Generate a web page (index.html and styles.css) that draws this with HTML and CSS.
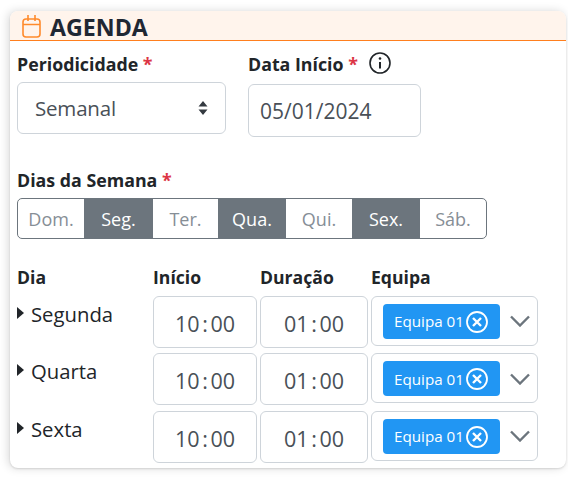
FILE: index.html
```html
<!DOCTYPE html>
<html lang="pt">
<head>
<meta charset="utf-8">
<title>Agenda</title>
<link rel="stylesheet" href="styles.css">
</head>
<body>
<section class="card">
  <header class="card-head">
    <svg class="cal" width="19" height="23" viewBox="0 0 19 23" fill="none" stroke="#ff8a2b" stroke-width="1.6"><rect x="1" y="4" width="17" height="18" rx="3"/><path d="M1 9.500h17M6 0v6M13 0v6"/></svg>
    <h1>AGENDA</h1>
  </header>
  <div class="card-body">
    <div class="top">
      <div class="f-per">
        <label class="lbl">Periodicidade <span class="req">*</span></label>
        <div class="select">Semanal
          <svg width="10" height="16" viewBox="0 0 10 16" fill="#343a40"><path d="M5 1l4.500 5.500h-9zM5 15L.5 9.500h9z"/></svg>
        </div>
      </div>
      <div class="f-date">
        <label class="lbl">Data Início <span class="req">*</span>
          <svg class="info" width="22" height="22" viewBox="0 0 22 22" fill="none" stroke="#212529" stroke-width="1.6"><circle cx="11" cy="11" r="10"/><path d="M11 10v6.500" stroke-width="2"/><circle cx="11" cy="6.500" r="1.300" fill="#212529" stroke="none"/></svg>
        </label>
        <div class="input">05/01/2024</div>
      </div>
    </div>
    <label class="lbl lbl-days">Dias da Semana <span class="req">*</span></label>
    <div class="days">
      <span class="day">Dom.</span><span class="day on">Seg.</span><span class="day">Ter.</span><span class="day on">Qua.</span><span class="day">Qui.</span><span class="day on">Sex.</span><span class="day">Sáb.</span>
    </div>
    <div class="sched">
      <div class="th">Dia</div><div class="th">Início</div><div class="th">Duração</div><div class="th">Equipa</div>

      <div class="dayname"><i class="tri"></i>Segunda</div>
      <div class="time">10 : 00</div>
      <div class="time">01 : 00</div>
      <div class="team"><span class="tag">Equipa 01<svg width="24" height="24" viewBox="0 0 24 24" fill="none" stroke="#fff" stroke-width="1.800"><circle cx="12" cy="12" r="10"/><path d="M8 8l8 8M16 8l-8 8" stroke-width="2.400"/></svg></span><svg class="chev" width="20" height="12" viewBox="0 0 20 12" fill="none" stroke="#6c757d" stroke-width="2.400"><path d="M1 1.500l9 9 9-9"/></svg></div>

      <div class="dayname"><i class="tri"></i>Quarta</div>
      <div class="time">10 : 00</div>
      <div class="time">01 : 00</div>
      <div class="team"><span class="tag">Equipa 01<svg width="24" height="24" viewBox="0 0 24 24" fill="none" stroke="#fff" stroke-width="1.800"><circle cx="12" cy="12" r="10"/><path d="M8 8l8 8M16 8l-8 8" stroke-width="2.400"/></svg></span><svg class="chev" width="20" height="12" viewBox="0 0 20 12" fill="none" stroke="#6c757d" stroke-width="2.400"><path d="M1 1.500l9 9 9-9"/></svg></div>

      <div class="dayname"><i class="tri"></i>Sexta</div>
      <div class="time">10 : 00</div>
      <div class="time">01 : 00</div>
      <div class="team"><span class="tag">Equipa 01<svg width="24" height="24" viewBox="0 0 24 24" fill="none" stroke="#fff" stroke-width="1.800"><circle cx="12" cy="12" r="10"/><path d="M8 8l8 8M16 8l-8 8" stroke-width="2.400"/></svg></span><svg class="chev" width="20" height="12" viewBox="0 0 20 12" fill="none" stroke="#6c757d" stroke-width="2.400"><path d="M1 1.500l9 9 9-9"/></svg></div>
    </div>
  </div>
</section>
</body>
</html>
```
FILE: styles.css
```css
* { box-sizing: border-box; }
html, body { height: 100%; }
body {
  margin: 0;
  padding: 11px 2px 0 10px;
  background: #fff;
  font-family: "Open Sans", "Noto Sans", sans-serif;
  color: #212529;
  overflow: hidden;
}
.card {
  height: 457px;
  background: #fff;
  border-radius: 8px;
  box-shadow: -2px 0 10px rgba(0,0,0,.15), 0 1px 2px rgba(0,0,0,.12);
  overflow: hidden;
}
.card-head {
  height: 30px;
  padding: 2px 0 0 12px;
  display: flex;
  align-items: center;
  gap: 9px;
  background: #fff4ec;
  border-bottom: 1px solid #ff7f1e;
}
.cal { flex: none; }
h1 {
  margin: 0;
  font-size: 23.200px;
  font-weight: 700;
  line-height: 26px;
  color: #1f2733;
}
.card-body { padding: 0 7px; }
.top { display: flex; gap: 22px; height: 122px; padding-top: 11px; }
.lbl {
  display: block;
  font-size: 17.800px;
  font-weight: 700;
  line-height: 24px;
}
.req { color: #dc3545; }
.f-per { width: 209px; }
.f-date { width: 173px; }
.info { vertical-align: -4px; margin-left: 6px; position: relative; top: -1px; }
.select, .input {
  border: 1px solid #ced4da;
  border-radius: 6px;
  color: #495057;
  display: flex;
  align-items: center;
}
.select { height: 52px; margin-top: 6px; padding: 0 17px; justify-content: space-between; font-size: 20.500px; letter-spacing: -.2px; }
.input { height: 53px; margin-top: 8px; padding: 0 11px; font-size: 21px; }
.lbl-days { margin-top: 5px; }
.days {
  display: grid;
  grid-template-columns: 66px 69px 65px 68px 66px 68px 66px;
  width: 470px;
  height: 41px;
  margin-top: 6px;
  border: 1px solid #6c757d;
  border-radius: 5px;
  overflow: hidden;
}
.day {
  display: flex;
  align-items: center;
  justify-content: center;
  font-size: 18px;
  color: #868e96;
}
.day.on { background: #6c757d; color: #fff; }
.sched {
  display: grid;
  grid-template-columns: 133px 104px 108px 167px;
  column-gap: 3px;
  grid-template-rows: 25px repeat(3, 52px);
  row-gap: 5.500px;
  margin-top: 26px;
}
.sched .th { font-size: 17.600px; font-weight: 700; line-height: 25px; margin-bottom: -6px; }
.dayname { display: flex; align-items: flex-start; font-size: 20.300px; line-height: 28px; padding-top: 4px; }
.tri {
  width: 0; height: 0; margin: 7px 7px 0 0;
  border-left: 7px solid #212529;
  border-top: 6px solid transparent;
  border-bottom: 6px solid transparent;
}
.time {
  border: 1px solid #ced4da;
  border-radius: 6px;
  display: flex;
  align-items: center;
  justify-content: center;
  font-size: 21.500px;
  padding-top: 3px;
  word-spacing: -3px;
  color: #495057;
}
.team {
  height: 50px;
  border: 1px solid #ced4da;
  border-radius: 6px;
  display: flex;
  align-items: center;
  padding: 1px 0 0 11px;
}
.tag {
  width: 117px;
  height: 35px;
  background: #2196f3;
  color: #fff;
  border-radius: 4px;
  font-size: 15.200px;
  display: flex;
  align-items: center;
  padding-left: 11px;
  gap: 1px;
}
.tag svg { margin-top: 1px; flex: none; }
.chev { margin-left: 10px; flex: none; }
```
